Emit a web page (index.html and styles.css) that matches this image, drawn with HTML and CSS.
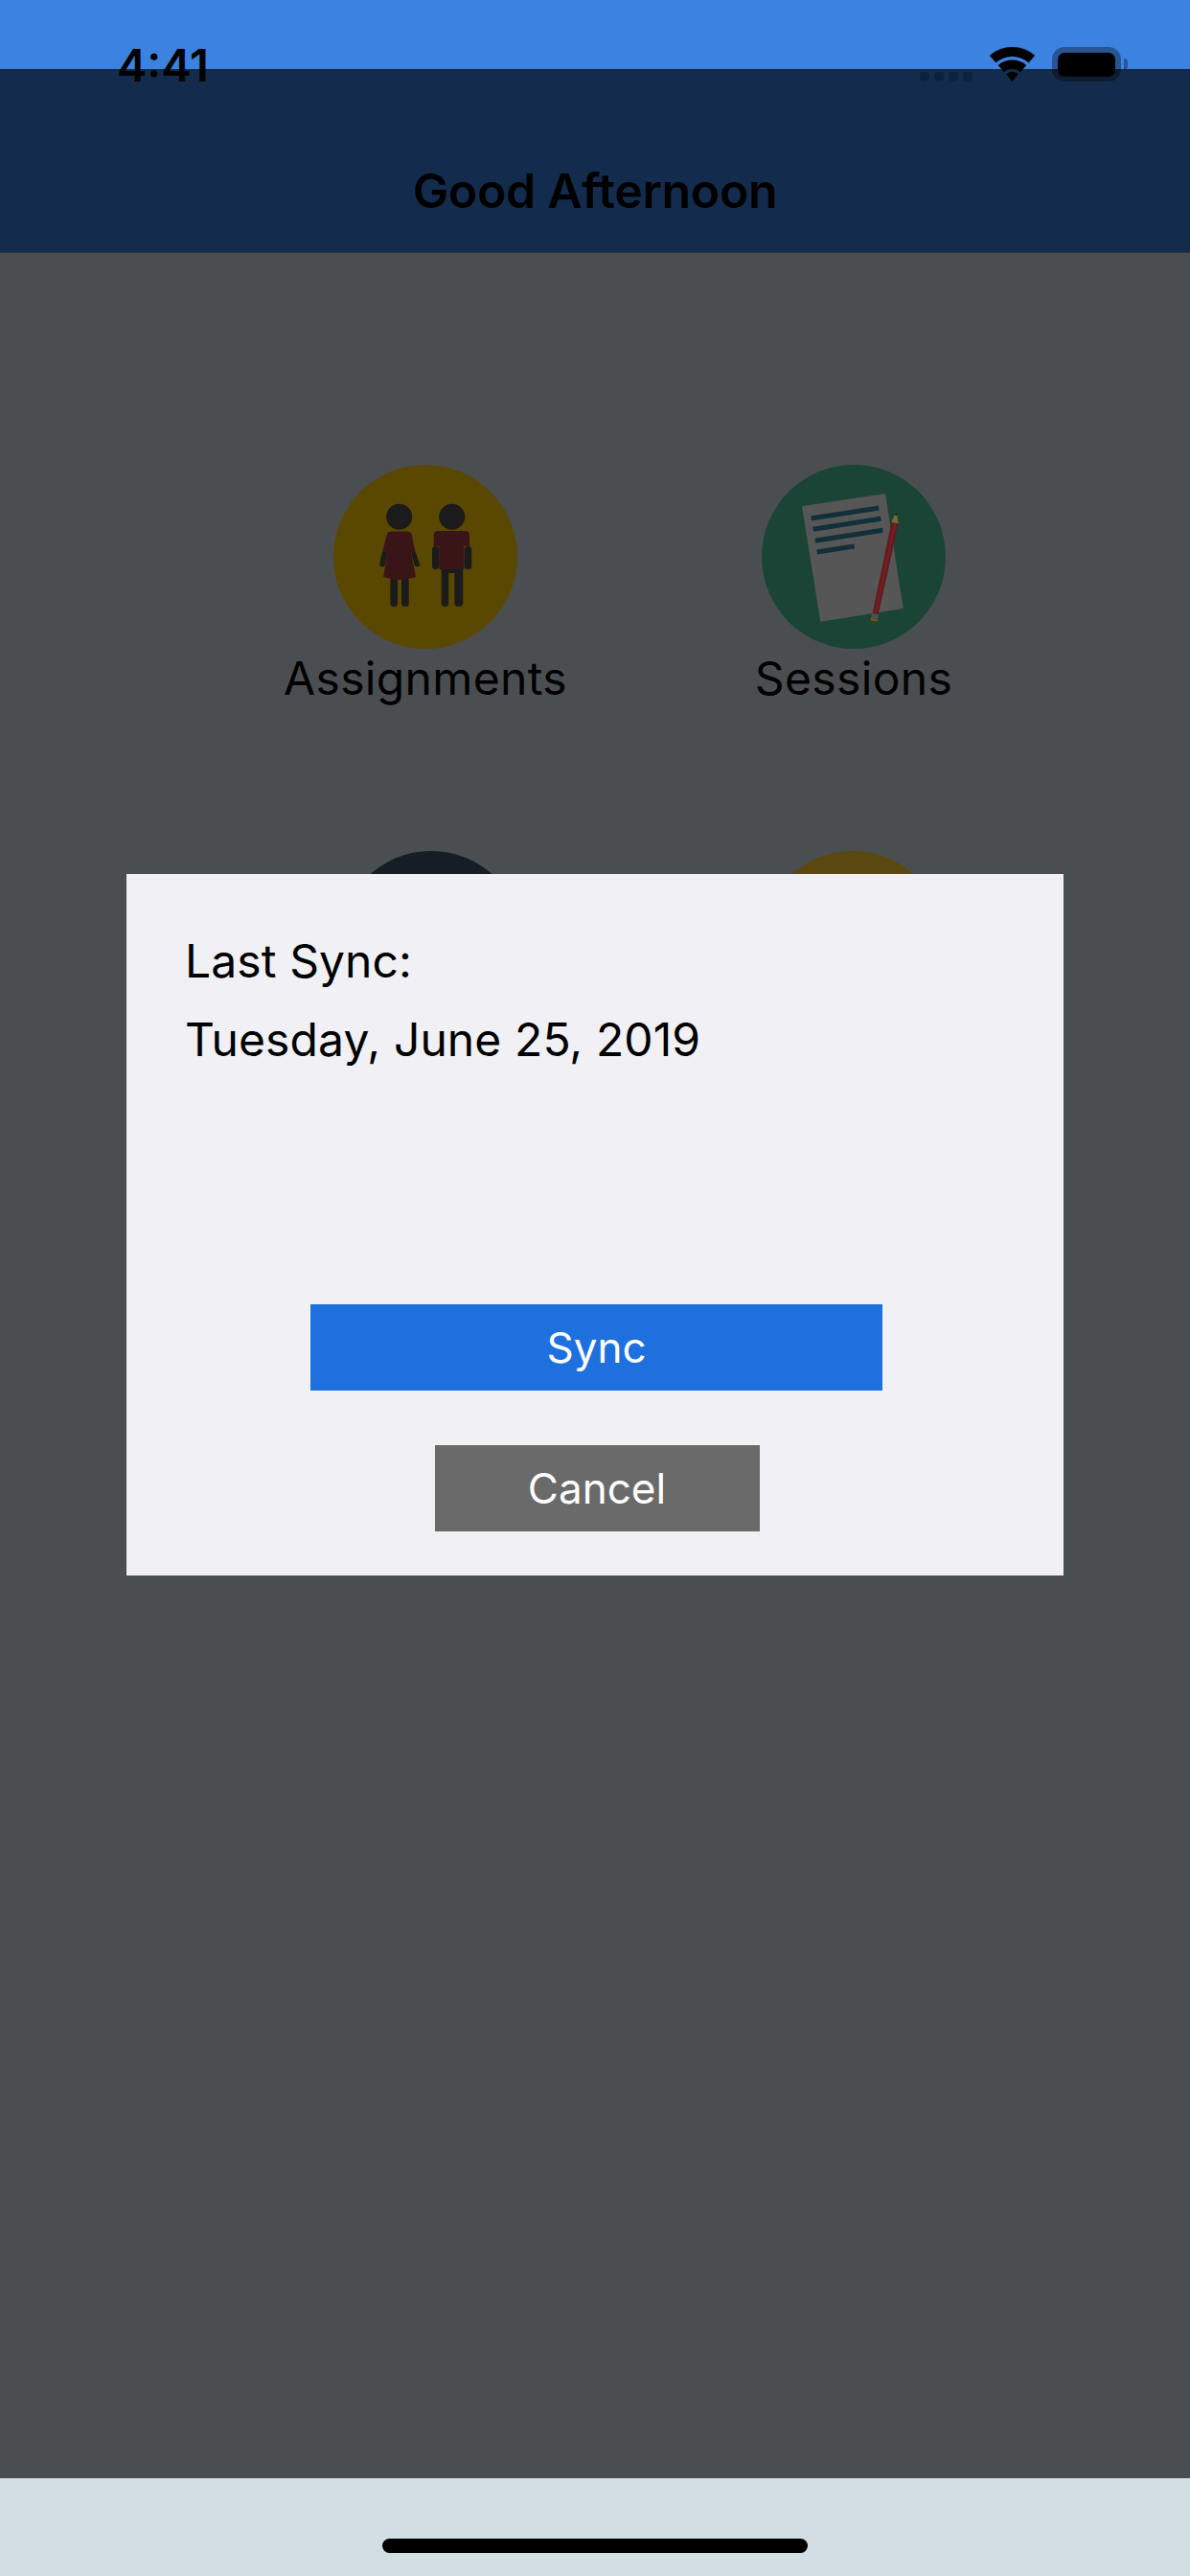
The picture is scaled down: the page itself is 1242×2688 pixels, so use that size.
FILE: index.html
```html
<!DOCTYPE html>
<html lang="en">
<head>
  <meta charset="UTF-8" />
  <meta name="viewport" content="width=device-width, initial-scale=1.0"/>
  <title>Good Afternoon</title>
  <link rel="stylesheet" href="styles.css">
</head>
<body>

<div class="screen">
  <!-- Status bar sits over the header -->
  <div class="status-bar">
    <span class="status-time">4:41</span>
    <div class="status-icons">
      <div class="signal">
        <span></span><span></span><span></span><span></span>
      </div>
      <svg class="wifi" viewBox="0 0 49 36" aria-hidden="true">
        <path d="M.8 8.9A36 36 0 0 1 48.2 8.9L41.6 16.4A26 26 0 0 0 7.4 16.4Z"/>
        <path d="M9.7 19A22.5 22.5 0 0 1 39.3 19L33.1 26.2A13 13 0 0 0 15.9 26.2Z"/>
        <path d="M18.2 28.2A10.3 10.3 0 0 1 30.8 28.2L24.5 36Z"/>
      </svg>
      <div class="battery">
        <div class="battery-level"></div>
      </div>
      <div class="battery-cap"></div>
    </div>
  </div>

  <div class="header-strip"></div>
  <header class="header">
    <h1>Good Afternoon</h1>
  </header>

  <main class="menu">
    <div class="menu-row menu-row-first">
      <div class="menu-item">
        <div class="menu-circle circle-gold">
          <svg viewBox="0 0 192 192" aria-hidden="true">
            <!-- woman -->
            <circle cx="68.7" cy="54.3" r="13.5" fill="#1b1b1b"/>
            <path d="M51.3 90L56.7 91.7L53.7 105Q50 108.5 48 104Z" fill="#1b1b1b"/>
            <path d="M85.3 90L81 91.7L84.7 105Q88.5 108.5 90.3 104Z" fill="#1b1b1b"/>
            <rect x="59.3" y="118" width="7.7" height="30" rx="3.5" fill="#1b1b1b"/>
            <rect x="71" y="118" width="7.7" height="30" rx="3.5" fill="#1b1b1b"/>
            <path d="M60 69.5H77.5Q80.5 69.5 81.5 72L85.3 90L81 91.7L86 117Q69 123 52 117L56.7 91.7L51.3 90L56 72Q57 69.5 60 69.5Z" fill="#3a1518"/>
            <!-- man -->
            <circle cx="123.7" cy="54.3" r="13.5" fill="#1b1b1b"/>
            <rect x="103" y="85" width="7.3" height="24" rx="3.6" fill="#1b1b1b"/>
            <rect x="136.7" y="85" width="7.6" height="24" rx="3.6" fill="#1b1b1b"/>
            <path d="M112.7 105H135.3V145Q135 148 131 148T126.3 145V113H120.3V145Q120 148 116.5 148T112.7 145Z" fill="#1b1b1b"/>
            <path d="M109 69H138Q142 69 142 74V85H136.3V109H110.3V85H104.7V74Q104.7 69 109 69Z" fill="#3a1518"/>
          </svg>
        </div>
        <span class="menu-label">Assignments</span>
      </div>

      <div class="menu-item">
        <div class="menu-circle circle-green">
          <svg viewBox="0 0 192 192" aria-hidden="true">
            <polygon points="42,43.3 129,30 147.7,150 61.3,163.7" fill="#565656"/>
            <g stroke="#11303a" stroke-width="5">
              <line x1="51.7" y1="56" x2="122.3" y2="45"/>
              <line x1="53.7" y1="67.3" x2="124.3" y2="56.3"/>
              <line x1="55.7" y1="79.3" x2="126.3" y2="68.3"/>
              <line x1="57.7" y1="91" x2="96.7" y2="85"/>
            </g>
            <!-- pencil -->
            <polygon points="135.3,60 142.7,61.3 121.7,156 115.7,155" fill="#641a1e"/>
            <polygon points="138,60.5 140.5,61 119.5,155.6 117.5,155.3" fill="#732024"/>
            <polygon points="135.3,60 142.7,61.3 140.7,48.3" fill="#7a6838"/>
            <polygon points="138.8,52.5 141.6,53 140.7,48.3" fill="#222222"/>
            <polygon points="115,155 122.3,156.6 121,161 114,160" fill="#505050"/>
            <polygon points="114,160 121,161.5 120.5,163.5 113.7,162.5" fill="#80540f"/>
          </svg>
        </div>
        <span class="menu-label">Sessions</span>
      </div>
    </div>

    <div class="menu-row menu-row-second">
      <div class="menu-item">
        <div class="menu-circle circle-dark"></div>
      </div>
      <div class="menu-item">
        <div class="menu-circle circle-olive"></div>
      </div>
    </div>
  </main>

  <footer class="footer">
    <div class="home-bar"></div>
  </footer>

  <!-- Sync dialog -->
  <div class="dialog">
    <p class="dialog-text">Last Sync:</p>
    <p class="dialog-text">Tuesday, June 25, 2019</p>
    <div class="dialog-actions">
      <button class="btn btn-sync" type="button">Sync</button>
      <button class="btn btn-cancel" type="button">Cancel</button>
    </div>
  </div>
</div>

</body>
</html>
```

FILE: styles.css
```css
* {
  box-sizing: border-box;
}

body {
  margin: 0;
  font-family: Inter, "Liberation Sans", sans-serif;
  color: #000;
  background: #4b4e51;
}

.screen {
  position: relative;
  width: 1242px;
  height: 2688px;
  display: flex;
  flex-direction: column;
  overflow: hidden;
}

.status-bar {
  position: absolute;
  top: 0;
  left: 0;
  right: 0;
  height: 96px;
  padding: 49px 65px 0 122px;
  display: flex;
  justify-content: space-between;
  align-items: flex-start;
}

.status-time {
  margin-top: 1px;
  font-size: 47px;
  line-height: 36px;
  font-weight: 600;
}

.status-icons {
  display: flex;
  align-items: flex-start;
}

.signal {
  display: flex;
  gap: 5px;
  margin-top: 26px;
  margin-right: 17px;
}

.signal span {
  width: 10px;
  height: 10px;
  border-radius: 4px;
  background: #0e2240;
}

.wifi {
  width: 49px;
  height: 36px;
  margin-right: 17px;
  fill: #000;
}

.battery {
  width: 72px;
  height: 36px;
  padding: 6px;
  border: 6px solid rgba(0, 0, 0, 0.35);
  border-radius: 13px;
  background-clip: padding-box;
}

.battery-level {
  width: 60px;
  height: 25px;
  margin: -6px 0 0 -6px;
  border-radius: 7px;
  background: #000;
}

.battery-cap {
  width: 4px;
  height: 12px;
  margin: 12px 0 0 3px;
  border-radius: 0 4px 4px 0;
  background: rgba(0, 0, 0, 0.35);
}

.header-strip {
  height: 72px;
  background: #3c82e0;
}

.header {
  height: 192px;
  background: #132b4c;
  border-bottom: 1px solid #2c3643;
  display: flex;
  justify-content: center;
  padding-top: 97px;
}

.header h1 {
  margin: 0;
  font-size: 50px;
  line-height: 60px;
  font-weight: 600;
  letter-spacing: -0.3px;
}

.menu {
  flex: 1;
  padding-top: 221px;
}

.menu-row {
  display: grid;
  height: 403px;
}

/* the rows are not on one axis, each has its own columns */
.menu-row-first {
  grid-template-columns: 448px 446px;
  padding-left: 220px;
}

.menu-row-second {
  grid-template-columns: 440px 440px;
  padding-left: 230px;
}

.menu-item {
  display: flex;
  flex-direction: column;
  align-items: center;
}

.menu-circle {
  width: 192px;
  height: 192px;
  border-radius: 50%;
  flex-shrink: 0;
}

.menu-circle svg {
  display: block;
  width: 192px;
  height: 192px;
}

.circle-gold {
  background: #5a4800;
}

.circle-green {
  background: #1a4436;
}

.circle-dark {
  background: #141e24;
}

.circle-olive {
  background: #5a4810;
}

.menu-label {
  font-size: 48px;
  line-height: 60px;
  margin-top: 1px;
  letter-spacing: 0.35px;
  white-space: nowrap;
}

.footer {
  height: 102px;
  background: #d3dee4;
  display: flex;
  justify-content: center;
  padding-top: 63px;
}

.home-bar {
  width: 444px;
  height: 15px;
  border-radius: 8px;
  background: #000;
}

.dialog {
  position: absolute;
  top: 912px;
  left: 132px;
  width: 978px;
  height: 732px;
  padding: 62px 0 0 61px;
  background: #f0f0f5;
}

.dialog-text {
  margin: 0 0 24px;
  font-size: 48px;
  line-height: 58px;
  letter-spacing: 0.1px;
}

.dialog-actions {
  position: absolute;
  left: 0;
  right: 0;
  top: 449px;
  display: flex;
  flex-direction: column;
  align-items: center;
  gap: 57px;
}

.btn {
  display: block;
  height: 90px;
  padding: 0;
  border: none;
  border-radius: 0;
  color: #fff;
  font-family: inherit;
  font-size: 44px;
}

.btn-sync {
  width: 597px;
  margin-left: 3px;
  background: #1f70df;
}

.btn-cancel {
  width: 339px;
  margin-left: 4px;
  background: #6a6a6a;
}
```
